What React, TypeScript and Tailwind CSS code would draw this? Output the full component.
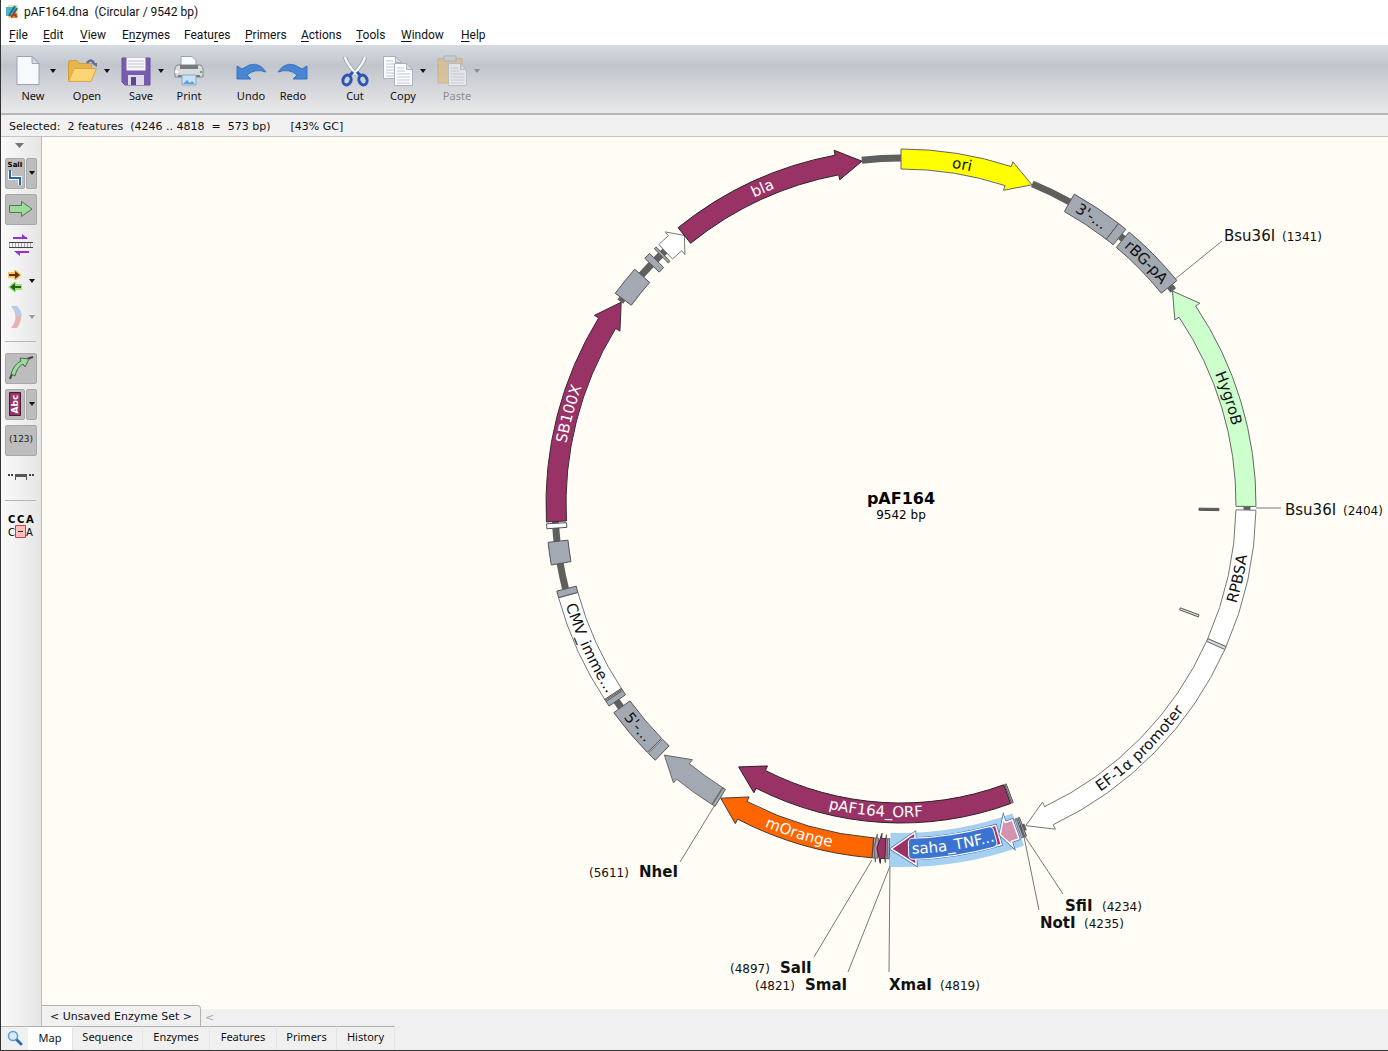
import type { ReactNode } from 'react';
import clsx from 'clsx';

// Plasmid geometry, angles are degrees clockwise from 12 o'clock
const CX = 901;
const CY = 504;
const RING = 345;

const PURPLE = '#993366';
const GRAY = '#a2a9b3';
const BONE = '#5f5f5f';

type Band = {
  from: number;
  to: number;
  fill: string;
  stroke?: string;
  r?: number;
};

type Arrow = {
  tail: number;
  tip: number;
  head: number;
  fill: string;
  stroke?: string;
  r?: number;
  barb?: number;
};

type ArcLabel = {
  id: string;
  text: string;
  at: number;
  color?: string;
  r?: number;
};

type Site = {
  name: string;
  pos: number;
  x: number;
  y: number;
  numX: number;
  bold?: boolean;
  line: [number, number, number, number];
};

function pt(r: number, deg: number) {
  const a = (deg * Math.PI) / 180;
  return `${(CX + r * Math.sin(a)).toFixed(2)} ${(CY - r * Math.cos(a)).toFixed(2)}`;
}

function arc(r: number, from: number, to: number) {
  return `A${r} ${r} 0 0 ${to > from ? 1 : 0} ${pt(r, to)}`;
}

function bandPath(r: number, half: number, from: number, to: number) {
  const o = r + half;
  const i = r - half;
  return `M${pt(o, from)}${arc(o, from, to)}L${pt(i, to)}${arc(i, to, from)}Z`;
}

function arrowPath({ tail, tip, head, r = RING, barb = 15 }: Arrow) {
  const o = r + 10;
  const i = r - 10;
  const neck = tip > tail ? tip - head : tip + head;
  return `M${pt(o, tail)}${arc(o, tail, neck)}L${pt(r + barb, neck)}L${pt(r, tip)}L${pt(r - barb, neck)}L${pt(i, neck)}${arc(i, neck, tail)}Z`;
}

const bones: [number, number][] = [
  [-6.5, 0],
  [22.3, 29.2],
  [39.3, 40],
  [51, 51.9],
  [90.4, 91],
  [158.9, 160.4],
  [234, 235.4],
  [255.8, 260.2],
  [263.8, 266.1],
  [266.7, 267.1],
  [305.8, 306.4],
  [311.4, 313.8],
  [314.9, 317],
];

const bands: Band[] = [
  { from: 29.2, to: 37.8, fill: GRAY },
  { from: 37.8, to: 39.3, fill: GRAY },
  { from: 40, to: 51, fill: GRAY },
  { from: 91, to: 113.7, fill: '#ffffff', stroke: '#777777' },
  { from: 113.7, to: 114.2, fill: '#dddddd', stroke: '#666666' },
  { from: 159.3, to: 159.6, fill: GRAY },
  { from: 159.8, to: 160.2, fill: GRAY },
  { from: 181.9, to: 182.3, fill: GRAY },
  { from: 184.3, to: 184.7, fill: GRAY },
  { from: 211.6, to: 212.1, fill: GRAY },
  { from: 223.8, to: 225.4, fill: GRAY },
  { from: 225.6, to: 234, fill: GRAY },
  { from: 236.2, to: 254.7, fill: '#ffffff', stroke: '#777777' },
  { from: 235.3, to: 236.2, fill: GRAY },
  { from: 236.4, to: 236.6, fill: GRAY },
  { from: 254.7, to: 255.8, fill: GRAY },
  { from: 260.1, to: 263.8, fill: GRAY },
  { from: 266, to: 266.8, fill: '#ffffff' },
  { from: 306.4, to: 311.4, fill: GRAY },
  { from: 313.8, to: 314.9, fill: GRAY },
  { from: 316, to: 316.4, fill: GRAY },
  { from: 159.4, to: 159.7, fill: GRAY, r: 309 },
  { from: 90.8, to: 91.2, fill: BONE, r: 308 },
  { from: 110.4, to: 110.8, fill: '#dddddd', r: 308 },
];

const arrows: Arrow[] = [
  { tail: 0, tip: 22.3, head: 4.2, fill: '#ffff00' },
  { tail: 90.4, tip: 51.9, head: 4.2, fill: '#ccffcc' },
  { tail: 114.2, tip: 158.8, head: 4.2, fill: '#ffffff', stroke: '#777777' },
  { tail: 184.7, tip: 211.5, head: 4.1, fill: '#ff6600', stroke: '#4a3a30' },
  { tail: 212.2, tip: 223.3, head: 4.1, fill: GRAY },
  { tail: 267.1, tip: 305.8, head: 4.2, fill: PURPLE, stroke: '#3a2a33' },
  { tail: 317, tip: 321.1, head: 2, fill: '#ffffff', stroke: '#777777' },
  { tail: 321.1, tip: 353.5, head: 4.2, fill: PURPLE, stroke: '#2c2028' },
  { tail: 159.9, tip: 211.7, head: 4.7, fill: PURPLE, stroke: '#2c2028', r: 309 },
  { tail: 182.3, tip: 183, head: 0.5, fill: '#b58ba6', barb: 14 },
  { tail: 183.8, tip: 184.5, head: 0.4, fill: '#b58ba6', barb: 14 },
  { tail: 182.6, tip: 184, head: 0.7, fill: PURPLE, stroke: '#3a2a33' },
];

const labels: ArcLabel[] = [
  { id: 'ori', text: 'ori', at: 10.2 },
  { id: 'ltr3', text: "3'-...", at: 33.5 },
  { id: 'rbg', text: 'rBG-pA', at: 45.4 },
  { id: 'hygro', text: 'HygroB', at: 72.1 },
  { id: 'rpbsa', text: 'RPBSA', at: 102.5 },
  { id: 'ef1a', text: 'EF-1α promoter', at: 135.7 },
  { id: 'morange', text: 'mOrange', at: 197.2, color: '#ffffff' },
  { id: 'ltr5', text: "5'-...", at: 229.7 },
  { id: 'cmv', text: 'CMV_imme...', at: 245.2 },
  { id: 'sb100x', text: 'SB100X', at: 285.2, color: '#ffffff' },
  { id: 'bla', text: 'bla', at: 336.3, color: '#ffffff' },
  { id: 'orf', text: 'pAF164_ORF', at: 184.7, color: '#ffffff', r: 308 },
  { id: 'saha', text: 'saha_TNF...', at: 171.3, color: '#ffffff' },
];

const sites: Site[] = [
  { name: 'Bsu36I', pos: 1341, x: 1224, y: 241, numX: 1282, line: [1174, 280, 1222, 241] },
  { name: 'Bsu36I', pos: 2404, x: 1285, y: 515, numX: 1343, line: [1256, 508, 1281, 508] },
  { name: 'SfiI', pos: 4234, x: 1065, y: 911, numX: 1102, bold: true, line: [1022, 832, 1063, 894] },
  { name: 'NotI', pos: 4235, x: 1040, y: 928, numX: 1084, bold: true, line: [1023, 832, 1039, 910] },
  { name: 'XmaI', pos: 4819, x: 889, y: 990, numX: 940, bold: true, line: [890, 859, 889, 972] },
  { name: 'SmaI', pos: 4821, x: 805, y: 990, numX: 755, bold: true, line: [890, 866, 848, 972] },
  { name: 'SalI', pos: 4897, x: 780, y: 973, numX: 730, bold: true, line: [872, 860, 814, 957] },
  { name: 'NheI', pos: 5611, x: 639, y: 877, numX: 589, bold: true, line: [718, 800, 680, 862] },
];

function CurvedLabel({ id, text, at, color = '#111111', r = RING }: ArcLabel) {
  // Bottom half reads counterclockwise so that the text stays upright
  const flipped = at > 90 && at < 270;
  const radius = flipped ? r + 5 : r - 5;
  const from = flipped ? at + 20 : at - 20;
  const to = flipped ? at - 20 : at + 20;
  return (
    <>
      <path id={id} d={`M${pt(radius, from)}${arc(radius, from, to)}`} fill="none" />
      <text className="text-[15px]" fill={color} textAnchor="middle">
        <textPath href={`#${id}`} startOffset="50%">
          {text}
        </textPath>
      </text>
    </>
  );
}

function Selection() {
  const saha: Arrow = { tail: 163.6, tip: 181.6, head: 4, fill: PURPLE, barb: 16 };
  const linker: Arrow = { tail: 160.6, tip: 163.3, head: 1.4, fill: '#d392ae' };
  return (
    <g>
      <path d={bandPath(346, 17, 160.2, 181.8)} fill="#a6d0ef" />
      {[saha, linker].map((a) => (
        <g key={a.tip}>
          <path d={arrowPath(a)} fill={a.fill} stroke="#4a6fc4" strokeWidth="3" />
          <path d={arrowPath(a)} fill={a.fill} stroke="#ffffff" strokeWidth="1.5" />
        </g>
      ))}
      {/* Label plate, rounded by its wide round-joined stroke */}
      <path d={bandPath(345, 6, 164.9, 178)} fill="#3a73d0" stroke="#ffffff" strokeWidth="10" strokeLinejoin="round" />
      <path d={bandPath(345, 6, 164.9, 178)} fill="#3a73d0" stroke="#3a73d0" strokeWidth="8" strokeLinejoin="round" />
    </g>
  );
}

function PlasmidMap() {
  return (
    <svg viewBox="42 137 1346 872" className="block h-full w-full font-['DejaVu_Sans',sans-serif]" role="img" aria-label="pAF164 plasmid map">
      {sites.map((s) => (
        <line key={s.pos} x1={s.line[0]} y1={s.line[1]} x2={s.line[2]} y2={s.line[3]} stroke="#777777" />
      ))}
      {bones.map(([from, to]) => (
        <path key={from} d={bandPath(346, 3.5, from, to)} fill={BONE} />
      ))}
      {bands.map((b) => (
        <path key={`${b.r}-${b.from}`} d={bandPath(b.r ?? RING, 10, b.from, b.to)} fill={b.fill} stroke={b.stroke ?? '#555555'} />
      ))}
      {arrows.map((a) => (
        <path key={a.tip} d={arrowPath(a)} fill={a.fill} stroke={a.stroke ?? '#666666'} />
      ))}
      <Selection />
      {labels.map((l) => (
        <CurvedLabel key={l.id} {...l} />
      ))}
      {sites.map((s) => (
        <g key={s.pos} fill="#111111">
          <text x={s.x} y={s.y} className={clsx('text-[15px]', s.bold && 'font-bold')}>
            {s.name}
          </text>
          <text x={s.numX} y={s.y} className="text-[12px]">
            ({s.pos})
          </text>
        </g>
      ))}
      <text x={CX} y="504" textAnchor="middle" className="text-[16px] font-bold">
        pAF164
      </text>
      <text x={CX} y="519" textAnchor="middle" className="text-[12px]">
        9542 bp
      </text>
    </svg>
  );
}

function Caret({ className }: { className?: string }) {
  return (
    <svg viewBox="0 0 6 4" className={clsx('h-[4px] w-[6px]', className)}>
      <path d="M0 0h6L3 4z" fill="currentColor" />
    </svg>
  );
}

function Sheet({ x, y }: { x: number; y: number }) {
  return (
    <g transform={`translate(${x} ${y})`}>
      <path d="M.5.5h12l6 6v16h-18z" fill="#fbfdff" stroke="#a9b1bd" />
      <path d="M12.500.5v6h6z" fill="#d8dfe8" stroke="#a9b1bd" />
      <path d="M3 5h7M3 8h8M3 11h13M3 14h13M3 17h13M3 20h13" stroke="#c3c9d2" />
    </g>
  );
}

const icons: Record<string, ReactNode> = {
  New: (
    <>
      <path d="M5 1.500h15l7 7V29.500H5z" fill="#f7fafd" stroke="#98a3b3" />
      <path d="M20 1.500v7h7z" fill="#d3dce8" stroke="#98a3b3" />
    </>
  ),
  Open: (
    <>
      <path d="M2.500 26V7.500q0-2 2-2h6l3 3h10q2 0 2 2V14" fill="#e9b44c" stroke="#d19c3c" />
      <path d="M2.500 26.500 8 13.500h22.500L25 26.500z" fill="#fbd574" stroke="#dba748" />
      <path d="M21 8q4-5 7 0" fill="none" stroke="#5b7299" strokeWidth="2.500" />
      <path d="M25 8h6v4z" fill="#5b7299" />
    </>
  ),
  Save: (
    <>
      <path d="M2 3h28v27H5l-3-3z" fill="#7a5cae" stroke="#6a4d9f" />
      <path d="M6.500 2.500h19v13h-19z" fill="#f8f8fb" />
      <path d="M8 6h16M8 9h16M8 12h16" stroke="#c5c1d2" />
      <path d="M8 20h16v10H8z" fill="#dddbe8" />
      <path d="M11 22h5v8h-5z" fill="#5f4494" />
    </>
  ),
  Print: (
    <>
      <path d="M8 1.500h11l4 4V13H8z" fill="#f6fbff" stroke="#94a3b5" />
      <path d="M4 10h24l2 3v9H2v-9z" fill="#d9dbdd" stroke="#83878d" />
      <path d="M7 10h18v4H7zM5 20h22v2H5z" fill="#777a7f" />
      <path d="M27 16h2v2h-2z" fill="#67b34e" />
      <path d="M2 15h3v3H2z" fill="#ffffff" />
      <path d="M9 20h14v10H9z" fill="#c7e2f6" stroke="#88a9c8" />
      <path d="m10 29 4-4 3 3 2-2 3 3z" fill="#5f9fd4" />
    </>
  ),
  Undo: <path d="M2 11v13h14l-4-4q8-7 19-3Q22 3 7 14z" fill="#4886d3" stroke="#3b74bd" />,
  Redo: <path d="M30 11v13H16l4-4q-8-7-19-3Q10 3 25 14z" fill="#4886d3" stroke="#3b74bd" />,
  Cut: (
    <>
      <path d="M6 2q1 6 12 18M26 2q-1 6-12 18" fill="none" stroke="#8d99a8" strokeWidth="4" />
      <path d="M6 2q1 6 12 18M26 2q-1 6-12 18" fill="none" stroke="#f3f6f9" strokeWidth="2.500" />
      <path d="m18 17 4 4M14 17l-4 4" stroke="#2d55b5" strokeWidth="3" />
      <ellipse cx="8" cy="25" rx="4" ry="5" fill="none" stroke="#2d55b5" strokeWidth="3" transform="rotate(20 8 25)" />
      <ellipse cx="24" cy="25" rx="4" ry="5" fill="none" stroke="#2d55b5" strokeWidth="3" transform="rotate(-20 24 25)" />
    </>
  ),
  Copy: (
    <>
      <Sheet x={1} y={1} />
      <Sheet x={12} y={8} />
    </>
  ),
  Paste: (
    <g opacity="0.5">
      <path d="M2 3.500h24V28H2z" fill="#e5b964" stroke="#c39a4b" />
      <path d="M8 1h12v5H8z" fill="#c9ccd2" stroke="#8d929b" />
      <Sheet x={12} y={8} />
    </g>
  ),
};

function ToolButton({ name, menu, disabled }: { name: string; menu?: boolean; disabled?: boolean }) {
  return (
    <button
      type="button"
      disabled={disabled}
      className={clsx('flex shrink-0 flex-col items-center gap-px pt-[10px]', menu ? 'w-[54px]' : 'w-[42px]', disabled ? 'text-[#8b8d91]' : 'text-[#111]')}
    >
      <span className={clsx('flex w-full items-center', menu ? 'gap-[6px] pl-[6px]' : 'justify-center')}>
        <svg viewBox="0 0 32 32" className="h-8 w-8 shrink-0">
          {icons[name]}
        </svg>
        {menu && <Caret />}
      </span>
      <span className="font-['Noto_Sans',sans-serif] text-[11px] leading-4">{name}</span>
    </button>
  );
}

const menus: [string, number, string][] = [
  ['File', 0, 'w-[34px]'],
  ['Edit', 0, 'w-[37px]'],
  ['View', 0, 'w-[42px]'],
  ['Enzymes', 1, 'w-[62px]'],
  ['Features', 5, 'w-[61px]'],
  ['Primers', 0, 'w-[56px]'],
  ['Actions', 0, 'w-[55px]'],
  ['Tools', 0, 'w-[45px]'],
  ['Window', 0, 'w-[60px]'],
  ['Help', 0, 'w-[40px]'],
];

function MenuBar() {
  return (
    <nav className="flex h-[21px] shrink-0 items-center pl-2 font-['Roboto',sans-serif] text-[12px]">
      {menus.map(([name, key, width]) => (
        <button key={name} type="button" className={clsx('text-left', width)}>
          {name.slice(0, key)}
          <span className="underline underline-offset-2">{name[key]}</span>
          {name.slice(key + 1)}
        </button>
      ))}
    </nav>
  );
}

function SideButton({ label, menu, pressed, disabled, children }: { label: string; menu?: boolean; pressed?: boolean; disabled?: boolean; children: ReactNode }) {
  const box = clsx('flex h-[31px] items-center justify-center rounded-[2px]', pressed && 'border border-[#a8a8a8] bg-[#bdbdbd]');
  return (
    <div className="flex h-9 items-center gap-px pl-1">
      <button type="button" aria-label={label} disabled={disabled} className={clsx(box, menu ? 'w-[20px]' : 'w-[32px]')}>
        {children}
      </button>
      {menu && (
        <button type="button" aria-label={`${label} options`} disabled={disabled} className={clsx(box, 'w-[11px]', disabled && 'text-[#999]')}>
          <Caret />
        </button>
      )}
    </div>
  );
}

function Divider({ className }: { className: string }) {
  return (
    <div className={clsx('pt-[6px] pl-1', className)}>
      <div className="h-px w-[31px] bg-[#b5b5b5]" />
    </div>
  );
}

function Sidebar() {
  return (
    <aside className="w-[41px] shrink-0 border-r border-[#b9b9b9] bg-gradient-to-r from-[#fafafa] to-[#e6e6e6] font-['DejaVu_Sans',sans-serif]">
      <div className="flex h-[18px] justify-center pt-[6px] pr-[3px] text-[#777]">
        <svg viewBox="0 0 9 5" className="h-[5px] w-[9px]">
          <path d="M0 0h9L4.500 5z" fill="currentColor" />
        </svg>
      </div>
      <SideButton label="Show enzymes" menu pressed>
        <svg viewBox="0 0 18 29" className="h-[29px] w-[18px]">
          <text x="9" y="8" textAnchor="middle" className="text-[7px] font-bold">
            SalI
          </text>
          <path d="M4 12v7h10v7" fill="none" stroke="#ffffff" strokeWidth="4" />
          <path d="M4 11v8h10v7" fill="none" stroke="#2a62b8" strokeWidth="2" />
        </svg>
      </SideButton>
      <SideButton label="Show features" pressed>
        <svg viewBox="0 0 26 18" className="h-[18px] w-[26px]">
          <path d="M1.500 5.500h12v-4L24 9l-10.500 7.500v-4h-12z" fill="#9bdc9b" stroke="#5c715c" />
        </svg>
      </SideButton>
      <SideButton label="Show primers">
        <svg viewBox="0 0 26 22" className="h-[22px] w-[26px]">
          <path d="M5 4h14M21 18H8" stroke="#9333cc" strokeWidth="2" />
          <path d="m14 0 6 5h-6zM12 22l-6-5h6z" fill="#9333cc" />
          <path d="M1 8.500h24M1 13.500h24" stroke="#444444" />
          <path d="M1 11h24" stroke="#aaaaaa" strokeWidth="4" strokeDasharray="1 2" />
        </svg>
      </SideButton>
      <SideButton label="Show ORFs" menu>
        <svg viewBox="0 0 16 22" className="h-[22px] w-[16px]">
          <path d="M1 2h6V0h2l6 5-6 5H7V8H1z" fill="#ffc46b" />
          <path d="M2 5h9" stroke="#5b3a10" strokeWidth="2" />
          <path d="M8 1l5 4-5 4z" fill="#5b3a10" />
          <path d="M15 14H9v-2H7l-6 5 6 5h2v-2h6z" fill="#9be86f" />
          <path d="M14 17H5" stroke="#24611c" strokeWidth="2" />
          <path d="M8 13l-5 4 5 4z" fill="#24611c" />
        </svg>
      </SideButton>
      <SideButton label="Show translations" menu disabled>
        <svg viewBox="0 0 16 24" className="h-[24px] w-[16px]">
          <path d="M4 1q9 11 0 22h6q8-11 0-22z" fill="#e9b0b0" />
          <path d="M4 1q5 5 5 10h6Q14 5 10 1z" fill="#b4cfe5" />
        </svg>
      </SideButton>
      <Divider className="h-[15px]" />
      <SideButton label="Curved features" pressed>
        <svg viewBox="0 0 26 26" className="h-[26px] w-[26px]">
          <path d="M2 24q1-4 3-6M19 4l6-2" fill="none" stroke="#444444" strokeWidth="2" />
          <path d="M3 19q3-10 10-13l-1-3 9 1-4 8-2-3q-6 3-8 12z" fill="#9bdc9b" stroke="#4f674f" />
        </svg>
      </SideButton>
      <SideButton label="Feature labels" menu pressed>
        <svg viewBox="0 0 14 26" className="h-[26px] w-[14px]">
          <path d="M1.500 1.500h11v23h-11z" fill={PURPLE} stroke="#4a1832" />
          <text x="-13" y="10" textAnchor="middle" transform="rotate(-90)" fill="#ffffff" className="text-[9px] font-bold">
            Abc
          </text>
        </svg>
      </SideButton>
      <SideButton label="Show positions" pressed>
        <span className="text-[9px] text-[#222]">(123)</span>
      </SideButton>
      <SideButton label="Line style">
        <svg viewBox="0 0 28 8" className="h-[8px] w-[28px]">
          <path d="M1 3h2M4 3h2M22 3h2M25 3h2" stroke="#444444" strokeWidth="2" />
          <path d="M8 2h12v6h-1V5H9v3H8z" fill="#555555" />
        </svg>
      </SideButton>
      <Divider className="h-[14px]" />
      <SideButton label="Show deletions">
        <svg viewBox="0 0 28 30" className="h-[30px] w-[28px]">
          <path d="M8.500 14.500h10v12h-10z" fill="#ffc0c0" stroke="#e03a3a" />
          <path d="M11 20.500h5" stroke="#222222" />
          <text x="1" y="12" className="text-[10px] font-bold">
            C
          </text>
          <text x="10" y="12" className="text-[10px] font-bold">
            C
          </text>
          <text x="19" y="12" className="text-[10px] font-bold">
            A
          </text>
          <text x="1" y="25" className="text-[10px]">
            C
          </text>
          <text x="19" y="25" className="text-[10px]">
            A
          </text>
        </svg>
      </SideButton>
    </aside>
  );
}

const views: [string, string][] = [
  ['Map', 'w-[45px] bg-white'],
  ['Sequence', 'w-[70px] pb-[2px]'],
  ['Enzymes', 'w-[67px] pb-[2px]'],
  ['Features', 'w-[67px] pb-[2px]'],
  ['Primers', 'w-[60px] pb-[2px]'],
  ['History', 'w-[58px] pb-[2px]'],
];

export default function App() {
  return (
    <div className="flex h-screen flex-col overflow-hidden border-b border-l border-[#333] bg-white font-['Noto_Sans',sans-serif] text-[#111]">
      <header className="flex h-6 shrink-0 items-center gap-[5px] pl-1 font-['Roboto',sans-serif] text-[12px] whitespace-pre">
        <svg viewBox="0 0 14 16" className="h-[16px] w-[14px]">
          <path d="M3 1h10v13H3z" fill="#f2dfb0" />
          <path d="M1 3h10l-3 9H1z" fill="#4fb3c6" />
          <path d="m4 12 6-10M7 13l5-9" stroke="#1f6f8b" strokeWidth="2" />
          <path d="M6 9h6v5H6z" fill="#e08a3c" />
          <path d="m6 13 3-3 3 3" fill="none" stroke="#b3361f" strokeWidth="2" />
        </svg>
        <h1>pAF164.dna  (Circular / 9542 bp)</h1>
      </header>
      <MenuBar />
      <div className="flex h-[70px] shrink-0 gap-5 border-b-2 border-[#b5b7ba] bg-gradient-to-b from-[#d6dae1] via-[#c1c5cc] via-30% to-[#e9e9ea] pl-[5px]">
        <div className="flex">
          <ToolButton name="New" menu />
          <ToolButton name="Open" menu />
          <ToolButton name="Save" menu />
          <ToolButton name="Print" />
        </div>
        <div className="flex">
          <ToolButton name="Undo" />
          <ToolButton name="Redo" />
        </div>
        <div className="flex">
          <ToolButton name="Cut" />
          <ToolButton name="Copy" menu />
          <ToolButton name="Paste" menu disabled />
        </div>
      </div>
      <div className="flex h-[22px] shrink-0 items-center border-b border-[#c4c4c4] bg-[#f1f1f1] pt-[3px] pl-2 font-['DejaVu_Sans',sans-serif] text-[11px] whitespace-pre">
        <span>Selected:  2 features  (4246 .. 4818  =  573 bp)</span>
        <span className="pl-5">[43% GC]</span>
      </div>

      <div className="flex min-h-0 flex-1">
        <Sidebar />
        <main className="flex min-w-0 flex-1 flex-col bg-[#fffdf5]">
          <div className="min-h-0 flex-1">
            <PlasmidMap />
          </div>
          <div className="flex h-[17px] shrink-0 items-end bg-[#f0f0f0] font-['DejaVu_Sans',sans-serif] text-[11px]">
            <button type="button" className="h-[21px] w-[159px] shrink-0 rounded-tr border-t border-r border-[#b5b0aa] bg-[#f1f1f1] pt-[2px]">
              &lt; Unsaved Enzyme Set &gt;
            </button>
            <span className="pl-1 text-[#aaa]">&lt;</span>
          </div>
        </main>
      </div>

      <footer className="flex h-6 shrink-0 bg-[#f0f0f0] text-[11px]">
        <button type="button" aria-label="Zoom" className="flex w-[27px] items-center justify-center border-t border-[#b5b5b5] pb-[2px]">
          <svg viewBox="0 0 16 16" className="h-4 w-4">
            <path d="m9 9 5 5" stroke="#2a6fb5" strokeWidth="3" strokeLinecap="round" />
            <circle cx="6" cy="6" r="4.500" fill="#d5ecfa" stroke="#5b9bd0" strokeWidth="1.500" />
          </svg>
        </button>
        {views.map(([name, style]) => (
          <button key={name} type="button" className={clsx('border-t border-r border-t-[#b0b0b0] border-r-[#e4e4e4]', style)}>
            {name}
          </button>
        ))}
      </footer>
    </div>
  );
}
